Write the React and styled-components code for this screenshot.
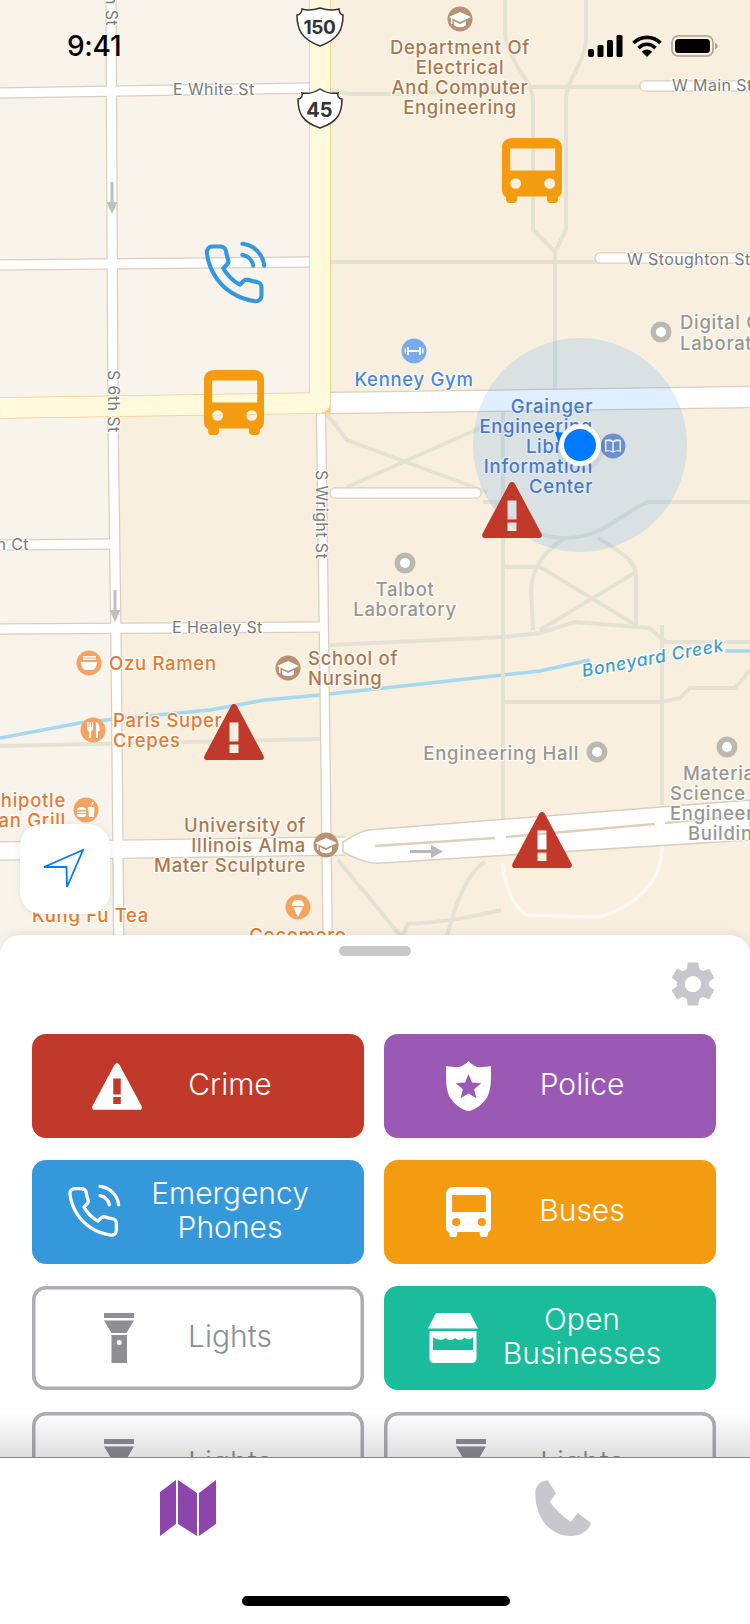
import React from 'react';
import styled, { createGlobalStyle } from 'styled-components';
import { FiPhoneCall } from 'react-icons/fi';
import { MdSettings } from 'react-icons/md';

const GlobalStyle = createGlobalStyle`
  html, body {
    margin: 0;
    padding: 0;
    background: #fff;
  }
  * {
    box-sizing: border-box;
  }
`;

const Screen = styled.div`
  width: 750px;
  height: 1624px;
  display: flex;
  flex-direction: column;
  overflow: hidden;
  font-family: 'Inter', 'Liberation Sans', sans-serif;
`;

const MapArea = styled.div`
  position: relative;
  flex: 0 0 965px;
  background: #f8efdf;
`;

const MapSvg = styled.svg`
  display: block;
  width: 750px;
  height: 965px;
`;

const MapText = styled.text`
  font-family: 'Inter', 'Liberation Sans', sans-serif;
  font-size: ${p => p.$size || 18.5}px;
  font-weight: ${p => p.$weight || 500};
  font-style: ${p => (p.$italic ? 'italic' : 'normal')};
  letter-spacing: ${p => (p.$track === undefined ? 0.7 : p.$track)}px;
  fill: ${p => p.$color};
  stroke: rgba(255, 255, 255, 0.75);
  stroke-width: 2.5px;
  paint-order: stroke;
`;

const StreetText = styled(MapText).attrs({ $size: 16, $weight: 400, $track: 0.4, $color: '#7b7b7a' })``;

const StatusBar = styled.div`
  position: absolute;
  top: 30px;
  left: 0;
  right: 0;
  height: 32px;
  padding: 0 32px 0 67px;
  display: flex;
  align-items: center;
  justify-content: space-between;
`;

const Clock = styled.span`
  font-size: 28px;
  font-weight: 500;
  color: #000;
  letter-spacing: -0.3px;
`;

const StatusIcons = styled.div`
  display: flex;
  align-items: center;
  gap: 9px;
`;

const Pin = styled.div`
  position: absolute;
  left: ${p => p.$x}px;
  top: ${p => p.$y}px;
  line-height: 0;
  color: ${p => p.$color};
`;

const LocateButton = styled.button`
  position: absolute;
  left: 20px;
  top: 824px;
  width: 90px;
  height: 90px;
  padding: 0;
  border: none;
  border-radius: 22px;
  background: #fff;
  box-shadow: 0 1px 8px rgba(0, 0, 0, 0.08);
  line-height: 0;
`;

const Sheet = styled.div`
  position: relative;
  flex: 1;
  margin-top: -30px;
  background: #fff;
  border-radius: 20px 20px 0 0;
  box-shadow: 0 -2px 8px rgba(0, 0, 0, 0.07);
  overflow: hidden;
`;

const Handle = styled.div`
  width: 72px;
  height: 10px;
  margin: 11px auto 0;
  border-radius: 5px;
  background: #c8c8c8;
`;

const GearRow = styled.div`
  display: flex;
  justify-content: flex-end;
  height: 50px;
  padding: 1px 30px 0 0;
  color: #c7c7cc;
  font-size: 54px;
  line-height: 0;
`;

const ButtonGrid = styled.div`
  display: grid;
  grid-template-columns: 332px 332px;
  grid-auto-rows: 104px;
  gap: 22px 20px;
  padding: 28px 0 0 32px;
`;

const FilterButton = styled.div`
  display: flex;
  align-items: center;
  border-radius: 14px;
  background: ${p => p.$bg || '#fff'};
  color: ${p => (p.$bg ? '#fff' : '#8e8e93')};
  box-shadow: ${p => (p.$bg ? 'none' : 'inset 0 0 0 3.5px #aeaeb2')};
`;

const IconSlot = styled.div`
  flex: 0 0 110px;
  display: flex;
  align-items: center;
  padding-left: ${p => p.$left}px;
  line-height: 0;
  svg {
    flex-shrink: 0;
  }
`;

const FilterLabel = styled.div`
  width: 176px;
  padding-bottom: 5px;
  text-align: center;
  font-size: 30px;
  font-weight: 300;
  line-height: 34px;
`;

const TabBar = styled.div`
  position: relative;
  flex: 0 0 167px;
  background: #fff;
  border-top: 1px solid #9a9a9a;
  display: flex;
  padding-top: 22px;

  &::before {
    content: '';
    position: absolute;
    left: 0;
    right: 0;
    bottom: 100%;
    height: 46px;
    background: linear-gradient(rgba(0, 0, 0, 0), rgba(0, 0, 0, 0.13));
  }
`;

const Tab = styled.div`
  flex: 1;
  display: flex;
  justify-content: center;
  height: 56px;
  line-height: 0;
`;

const HomeIndicator = styled.div`
  position: absolute;
  left: 242px;
  bottom: 18px;
  width: 268px;
  height: 10px;
  border-radius: 5px;
  background: #000;
`;

// --- icons ---

const BusIcon = ({ w = 60, h = 65 }) => (
  <svg width={w} height={h} viewBox="0 0 44 50" preserveAspectRatio="none" fill="currentColor">
    <path
      fillRule="evenodd"
      d="M8 0h28c5 0 8 3 8 7v33c0 3-1.500 5-3 5.500V48a2.500 2.500 0 0 1-2.500 2h-3A2.500 2.500 0 0 1 33 48v-3H11v3a2.500 2.500 0 0 1-2.500 2h-3A2.500 2.500 0 0 1 3 48v-2.500C1.500 45 0 43 0 40V7c0-4 3-7 8-7zM6 8v17h33V8H6zm4 23a4 4 0 1 0 0 8 4 4 0 0 0 0-8zm25 0a4 4 0 1 0 0 8 4 4 0 0 0 0-8z"
    />
  </svg>
);

const WarningIcon = ({ w = 60, h = 56 }) => (
  <svg width={w} height={h} viewBox="0 0 60 56" fill="currentColor">
    <path
      fillRule="evenodd"
      d="M27 2c1.600-2.700 4.400-2.700 6 0l26.400 49.500c1.200 2.300.2 4.500-2.400 4.500H3c-2.600 0-3.600-2.200-2.400-4.500L27 2zm-1.500 16.500v19h9v-19h-9zm0 22v8.500h9v-8.500h-9z"
    />
  </svg>
);

const ShieldIcon = () => (
  <svg width="45" height="50" viewBox="0 0 45 50" fill="currentColor">
    <path
      fillRule="evenodd"
      d="M22.500 0c3 3 7 6.200 11.500 6.200 3.800 0 7.500-.6 11-1.200 0 14 .5 25-5 33-4 5.600-11 11-17.500 12C16 49 9 43.600 5 38-.5 30 0 19 0 5c3.500.6 7.200 1.200 11 1.200C15.500 6.200 19.500 3 22.500 0zm0 13l-3.500 8.500-9.200.7 7 6-2.200 9 7.900-4.800 7.900 4.800-2.200-9 7-6-9.200-.7-3.500-8.500z"
    />
  </svg>
);

const LightIcon = () => (
  <svg width="30" height="50" viewBox="0 0 30 50" fill="currentColor">
    <path
      fillRule="evenodd"
      d="M0 0h30v5H0zM0 7.500h30L22.500 20h-15zM7.500 22h15.500v28H7.500zM15.200 27a2.500 2.500 0 1 0 0 5 2.500 2.500 0 0 0 0-5z"
    />
  </svg>
);

const StoreIcon = () => (
  <svg width="50" height="50" viewBox="0 0 50 50" fill="currentColor">
    <path d="M8 0h34l8 15.500H0z" />
    <path
      fillRule="evenodd"
      d="M1.500 18h47v27c0 3-2 5-5 5h-37c-3 0-5-2-5-5V18zm3.500 6v13h40V24c-2 3-6 3-8.500 .5-2.500 3-7 3-9.500 .5-2.500 2.500-7 2.500-9.500 0-2.500 2.500-7 2.500-9.500-.5C13 27 8 27 5 24z"
    />
  </svg>
);

const MapTabIcon = () => (
  <svg width="56" height="56" viewBox="0 0 56 56" fill="#8e44ad">
    <path d="M0 12L16 0v44L0 56zM18 0l19 13v43L18 44zM39 13L56 0v44L39 56z" />
  </svg>
);

const PhoneTabIcon = () => (
  <svg width="56" height="56" viewBox="0 0 56 56" fill="#c7c7cc" stroke="#c7c7cc" strokeWidth="1.500" strokeLinejoin="round">
    <path d="M12 1C6 2 1 6 1 14c0 11 4 24 12 32 7 7 17 10 25 9 8 0 16-6 17-12L43 34l-7 9c-7-4-19-16-22-21l6-9z" />
  </svg>
);

const NavIcon = () => (
  <svg width="90" height="90" viewBox="0 0 90 90" fill="none" stroke="#007aff" strokeWidth="1.800">
    <path d="M63 26L24 43h22.500L47 63z" />
  </svg>
);

const SignalIcon = () => (
  <svg width="35" height="22" viewBox="0 0 35 22" fill="#000">
    <rect x="0" y="14" width="6" height="8" rx="2" />
    <rect x="9.500" y="10" width="6" height="12" rx="1.500" />
    <rect x="19" y="5" width="6" height="17" rx="1.500" />
    <rect x="28.500" y="0" width="6" height="22" rx="1.500" />
  </svg>
);

const WifiIcon = () => (
  <svg width="30" height="22" viewBox="0 0 30 22" fill="none" stroke="#000" strokeWidth="3.600">
    <path d="M1.500 8C9 .5 21 .5 28.500 8" />
    <path d="M6.500 13c5-5 12-5 17 0" />
    <path d="M15 22l-5.200-5.200c3-3 7.400-3 10.400 0z" fill="#000" stroke="none" />
  </svg>
);

const BatteryIcon = () => (
  <svg width="47" height="22" viewBox="0 0 47 22">
    <rect x="1" y="1" width="41" height="20" rx="6" fill="none" stroke="#a89f8c" strokeWidth="1.500" />
    <rect x="4" y="4" width="35" height="14" rx="3.500" fill="#000" />
    <path d="M44 8c1.800.5 2.500 1.500 2.500 3s-.7 2.500-2.500 3z" fill="#a89f8c" />
  </svg>
);

// --- map drawing ---

const Poi = ({ x, y, fill, r = 12.500, children }) => (
  <g transform={`translate(${x} ${y})`}>
    <circle r={r} fill={fill} />
    {children}
  </g>
);

const Cap = () => (
  <path d="M0-7L11-2 0 3-11-2zM-6 2v4c3 3 9 3 12 0V2L0 5zM-9-1v6h1.500v-6z" fill="#fff" />
);

const Ring = ({ x, y }) => (
  <g>
    <circle cx={x} cy={y} r={10.500} fill="#bcb8b0" />
    <circle cx={x} cy={y} r={5} fill="#fff" />
  </g>
);

const Pois = () => (
  <g>
    <Poi x={460} y={19} fill="#b89272"><Cap /></Poi>
    <Poi x={288} y={668} fill="#b89272"><Cap /></Poi>
    <Poi x={326} y={845} fill="#b89272"><Cap /></Poi>
    <Poi x={414} y={351} fill="#7aa9ec">
      <path d="M-7-1h14v2H-7zM-7-4h2v8h-2zM5-4h2v8H5zM-9.500-2.500h1.500v5h-1.500zM8-2.500h1.500v5H8z" fill="#fff" />
    </Poi>
    <Poi x={613} y={446} fill="#7b90c8">
      <path d="M-8-6c3-1 6-1 8 1 2-2 5-2 8-1V6c-3-1-6-1-8 1-2-2-5-2-8-1zM-6.500-4.500v9c2-.4 4.200-.2 5.700.8v-9c-1.500-1-3.700-1.200-5.700-.8zm13 0c-2-.4-4.200-.2-5.700.8v9c1.500-1 3.700-1.200 5.700-.8z" fill="#fff" fillRule="evenodd" />
    </Poi>
    <Poi x={89} y={663} fill="#f4a362">
      <path d="M-8-1H8C8 4 5 7 3 7H-3C-5 7-8 4-8-1zM-6-7H7v1.500H-6zM-6-4.500H7V-3H-6z" fill="#fff" />
    </Poi>
    <Poi x={93} y={730} fill="#f4a362">
      <path d="M-6-8v6c0 2 1 3 2 3.500V8h2V1.500c1-.5 2-1.500 2-3.500v-6H-1v5h-1v-5h-1.500v5h-1v-5zM3-8c3 1 4 5 3.500 9H5v7H3z" fill="#fff" />
    </Poi>
    <Poi x={86} y={810} fill="#f4a362">
      <path d="M-9 0c0-4 9-4 9 0zM-9 1.500h9v1.500h-9zM-9 4h9c0 2-1 3-2 3h-5c-1 0-2-1-2-3zM2-3h6.500L8 7H3zM5-3l1-5h2" fill="#fff" />
    </Poi>
    <Poi x={298} y={907} fill="#f4a362">
      <path d="M-6-1c-1-8 13-8 12 0zM-5 0H5L0 10z" fill="#fff" />
    </Poi>
    <Ring x={661} y={332} />
    <Ring x={405} y={563} />
    <Ring x={597} y={752} />
    <Ring x={727} y={747} />
  </g>
);

const lightGround = 'M0 0H310V400H116V965H0Z';

const mainRoads = [
  { d: 'M111 0L113 420L116 640L119 965', w: 9 },
  { d: 'M0 93L310 88', w: 9 },
  { d: 'M0 265L310 262', w: 9 },
  { d: 'M0 629L322 627', w: 9 },
  { d: 'M0 545L115 544', w: 9 },
  { d: 'M321 410L324 640L328 965', w: 8 },
  { d: 'M0 851L345 846', w: 17 },
  { d: 'M330 403L750 397', w: 20 },
  { d: 'M335 493H476', w: 9, cap: 'round' },
  { d: 'M645 86H750', w: 9, cap: 'round' },
  { d: 'M600 258H750', w: 9, cap: 'round' },
];

const walkways = [
  'M505 0V30C505 60 533 80 533 100V230L555 252V400',
  'M586 0V40C586 60 566 80 566 100V230L555 252',
  'M330 90L350 94H400L533 87H645',
  'M330 262H600',
  'M327 414L347 440L487 492',
  'M347 487L487 425',
  'M503 410V820',
  'M483 502H503',
  'M750 502H648C625 510 605 538 565 538C540 538 515 525 495 505',
  'M565 538C545 550 531 570 531 590L533 630',
  'M598 538C615 548 636 560 636 575V625',
  'M503 567H540L636 625',
  'M636 572L540 630',
  'M330 645L503 637L540 633L575 622L650 628L665 642H750',
  'M503 702H662L680 698L690 688H735L750 670',
  'M662 625V805',
  'M0 746L322 739',
  'M338 860L400 935',
  'M485 862C470 870 455 900 445 945',
  'M501 910C480 915 450 922 408 924L398 945',
];

const MapDrawing = () => (
  <MapSvg viewBox="0 0 750 965">
    <path d={lightGround} fill="#f8f4ec" />

    {/* creek */}
    <path d="M0 738L85 722L210 710L265 700L320 695L540 671L590 660M725 651H750" fill="none" stroke="#a6d8ef" strokeWidth="3.500" />

    {/* campus walkways */}
    {walkways.map(d => (
      <path key={d} d={d} fill="none" stroke="#e4e3d3" strokeWidth="4" />
    ))}
    <path d="M502 862C505 885 512 905 526 915L600 917C635 905 662 885 662 845" fill="none" stroke="#fbf8f1" strokeWidth="3.500" />

    {/* streets, casing then fill */}
    {mainRoads.map(r => (
      <path key={`c${r.d}`} d={r.d} fill="none" stroke="#d8cfc0" strokeWidth={r.w + 2.500} strokeLinecap={r.cap} />
    ))}
    {mainRoads.map(r => (
      <path key={r.d} d={r.d} fill="none" stroke="#fff" strokeWidth={r.w} strokeLinecap={r.cap} />
    ))}

    {/* divided road at the bottom */}
    <path d="M343 842C350 838 358 832 368 830L750 800V840L382 863C372 864 362 862 343 852Z" fill="#fff" stroke="#d8cfc0" strokeWidth="1.500" />
    <path d="M375 846L495 838M506 837L655 824M665 823L750 815" fill="none" stroke="#dfd0bb" strokeWidth="2.500" />

    {/* US 45 on top of the streets */}
    <path d="M320 0V403L0 408" fill="none" stroke="#f6c98c" strokeWidth="21.500" />
    <path d="M320 0V403L0 408" fill="none" stroke="#fefadb" strokeWidth="20" strokeLinejoin="round" />

    {/* one-way arrows */}
    <path d="M110.500 182h3v20h4l-5.500 12-5.500-12h4z" fill="#c0bfbc" />
    <path d="M113.500 590h3v20h4l-5.500 12-5.500-12h4z" fill="#c0bfbc" />
    <path d="M410 850h21v-5l12 6.500-12 6.500v-5h-21z" fill="#b8b8b6" />

    <Pois />

    {/* route shields */}
    <g fill="#fff" stroke="#333" strokeWidth="1.500">
      <path d="M297 15c3 0 5-3 5-6 6 2 12 1 18-1 6 2 12 3 19 1 0 3 2 6 4 6 0 14-4 24-23 31-19-7-23-17-23-31z" />
      <path d="M298 99c3 0 5-3 4-6 6 1 12 0 18-4 6 4 12 5 18 4-1 3 1 6 4 6 0 14-4 23-22 29-18-6-22-15-22-29z" />
    </g>
    <MapText x="319.500" y="34" textAnchor="middle" $size={19} $weight={700} $track={-0.3} $color="#333">150</MapText>
    <MapText x="319.500" y="117" textAnchor="middle" $size={20} $weight={700} $track={0} $color="#333">45</MapText>

    {/* street names */}
    <StreetText x="173" y="95">E White St</StreetText>
    <StreetText x="672" y="91">W Main St</StreetText>
    <StreetText x="627" y="265">W Stoughton St</StreetText>
    <StreetText x="172" y="633">E Healey St</StreetText>
    <StreetText x="29" y="550" textAnchor="end">Oregon Ct</StreetText>
    <StreetText transform="translate(106 26) rotate(90)" textAnchor="end">Green St</StreetText>
    <StreetText transform="translate(108 370) rotate(90)">S 6th St</StreetText>
    <StreetText transform="translate(316 470) rotate(90)">S Wright St</StreetText>

    {/* places */}
    <g textAnchor="middle">
      <MapText x="460" y="54" $color="#a9794f">Department Of</MapText>
      <MapText x="460" y="74" $color="#a9794f">Electrical</MapText>
      <MapText x="460" y="94" $color="#a9794f">And Computer</MapText>
      <MapText x="460" y="114" $color="#a9794f">Engineering</MapText>
      <MapText x="414" y="386" $color="#4f86d6">Kenney Gym</MapText>
      <MapText x="405" y="596" $color="#999791">Talbot</MapText>
      <MapText x="405" y="616" $color="#999791">Laboratory</MapText>
      <MapText x="298" y="942" $color="#e07d35">Cocomero</MapText>
    </g>
    <MapText x="680" y="329" $color="#999791">Digital Computer</MapText>
    <MapText x="680" y="350" $color="#999791">Laboratory</MapText>
    <g textAnchor="end">
      <MapText x="593" y="413" $color="#5b78b8">Grainger</MapText>
      <MapText x="593" y="433" $color="#5b78b8">Engineering</MapText>
      <MapText x="593" y="453" $color="#5b78b8">Library</MapText>
      <MapText x="593" y="473" $color="#5b78b8">Information</MapText>
      <MapText x="593" y="493" $color="#5b78b8">Center</MapText>
      <MapText x="66" y="807" $color="#e07d35">Chipotle</MapText>
      <MapText x="66" y="827" $color="#e07d35">Mexican Grill</MapText>
      <MapText x="306" y="832" $color="#a9794f">University of</MapText>
      <MapText x="306" y="852" $color="#a9794f">Illinois Alma</MapText>
      <MapText x="306" y="872" $color="#a9794f">Mater Sculpture</MapText>
      <MapText x="579" y="760" $color="#999791">Engineering Hall</MapText>
    </g>
    <MapText x="109" y="670" $color="#e07d35">Ozu Ramen</MapText>
    <MapText x="113" y="727" $color="#e07d35">Paris Super</MapText>
    <MapText x="113" y="747" $color="#e07d35">Crepes</MapText>
    <MapText x="308" y="665" $color="#a9794f">School of</MapText>
    <MapText x="308" y="685" $color="#a9794f">Nursing</MapText>
    <MapText x="32" y="922" $color="#e07d35">Kung Fu Tea</MapText>
    <MapText x="683" y="780" $color="#999791">Materials</MapText>
    <MapText x="670" y="800" $color="#999791">Science and</MapText>
    <MapText x="670" y="820" $color="#999791">Engineering</MapText>
    <MapText x="688" y="840" $color="#999791">Building</MapText>
    <MapText transform="translate(583 677) rotate(-10.500)" $size={17.500} $italic $color="#3f9ec8">Boneyard Creek</MapText>

    {/* my location */}
    <circle cx="580" cy="445" r="107" fill="#007aff" fillOpacity="0.12" />
    <path d="M555 432L570 433L560 447Z" fill="#007aff" />
    <circle cx="580" cy="448" r="24" fill="#000" fillOpacity="0.05" />
    <circle cx="580" cy="445" r="21" fill="#fff" />
    <circle cx="580" cy="445" r="16" fill="#007aff" />
  </MapSvg>
);

const App = () => (
  <Screen>
    <GlobalStyle />
    <MapArea>
      <MapDrawing />

      <Pin $x={502} $y={138} $color="#f39c12"><BusIcon /></Pin>
      <Pin $x={204} $y={370} $color="#f39c12"><BusIcon /></Pin>
      <Pin $x={201} $y={241} $color="#3498db"><FiPhoneCall size={66} strokeWidth={1.500} /></Pin>
      <Pin $x={482} $y={482} $color="#c0392b"><WarningIcon /></Pin>
      <Pin $x={204} $y={704} $color="#c0392b"><WarningIcon /></Pin>
      <Pin $x={512} $y={812} $color="#c0392b"><WarningIcon /></Pin>

      <StatusBar>
        <Clock>9:41</Clock>
        <StatusIcons>
          <SignalIcon />
          <WifiIcon />
          <BatteryIcon />
        </StatusIcons>
      </StatusBar>

      <LocateButton>
        <NavIcon />
      </LocateButton>
    </MapArea>

    <Sheet>
      <Handle />
      <GearRow>
        <MdSettings />
      </GearRow>
      <ButtonGrid>
        <FilterButton $bg="#c0392b">
          <IconSlot $left={60}><WarningIcon w={50} h={47} /></IconSlot>
          <FilterLabel>Crime</FilterLabel>
        </FilterButton>
        <FilterButton $bg="#9b59b6">
          <IconSlot $left={62}><ShieldIcon /></IconSlot>
          <FilterLabel>Police</FilterLabel>
        </FilterButton>
        <FilterButton $bg="#3498db">
          <IconSlot $left={33}><FiPhoneCall size={56} strokeWidth={1.400} /></IconSlot>
          <FilterLabel>Emergency Phones</FilterLabel>
        </FilterButton>
        <FilterButton $bg="#f39c12">
          <IconSlot $left={62}><BusIcon w={45} h={50} /></IconSlot>
          <FilterLabel>Buses</FilterLabel>
        </FilterButton>
        <FilterButton>
          <IconSlot $left={72}><LightIcon /></IconSlot>
          <FilterLabel>Lights</FilterLabel>
        </FilterButton>
        <FilterButton $bg="#1abc9c">
          <IconSlot $left={44}><StoreIcon /></IconSlot>
          <FilterLabel>Open Businesses</FilterLabel>
        </FilterButton>
        <FilterButton>
          <IconSlot $left={72}><LightIcon /></IconSlot>
          <FilterLabel>Lights</FilterLabel>
        </FilterButton>
        <FilterButton>
          <IconSlot $left={72}><LightIcon /></IconSlot>
          <FilterLabel>Lights</FilterLabel>
        </FilterButton>
      </ButtonGrid>
    </Sheet>

    <TabBar>
      <Tab><MapTabIcon /></Tab>
      <Tab><PhoneTabIcon /></Tab>
      <HomeIndicator />
    </TabBar>
  </Screen>
);

export default App;
